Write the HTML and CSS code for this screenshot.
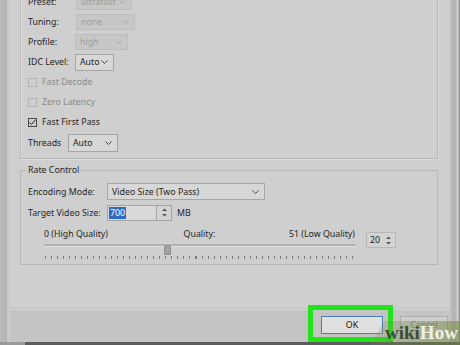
FILE: index.html
```html
<!DOCTYPE html>
<html>
<head>
<meta charset="utf-8">
<link rel="stylesheet" href="styles.css">
</head>
<body>
<div class="screen">
  <div class="top">
    <div class="edge-left"></div>
    <div class="window">
      <div class="main">
        <div class="group group-x264">
          <div class="row">
            <span class="lbl w48">Preset:</span>
            <span class="select disabled s-preset">ultrafast<svg class="chev" width="7" height="4" viewBox="0 0 7 4"><polyline points="0.5,0.5 3.5,3.5 6.5,0.5"/></svg></span>
          </div>
          <div class="row">
            <span class="lbl w48">Tuning:</span>
            <span class="select disabled s-tuning">none<svg class="chev" width="7" height="4" viewBox="0 0 7 4"><polyline points="0.5,0.5 3.5,3.5 6.5,0.5"/></svg></span>
          </div>
          <div class="row">
            <span class="lbl w47">Profile:</span>
            <span class="select disabled s-profile">high<svg class="chev" width="7" height="4" viewBox="0 0 7 4"><polyline points="0.5,0.5 3.5,3.5 6.5,0.5"/></svg></span>
          </div>
          <div class="row">
            <span class="lbl w47">IDC Level:</span>
            <span class="select s-idc">Auto<svg class="chev" width="7" height="4" viewBox="0 0 7 4"><polyline points="0.5,0.5 3.5,3.5 6.5,0.5"/></svg></span>
          </div>
          <div class="row disabled-text">
            <span class="check"></span>Fast Decode
          </div>
          <div class="row disabled-text">
            <span class="check"></span>Zero Latency
          </div>
          <div class="row">
            <span class="check checked"><svg width="7" height="7" viewBox="0 0 7 7"><polyline points="0.5,3.5 2.5,5.5 6.5,0.8"/></svg></span>Fast First Pass
          </div>
          <div class="row tall">
            <span class="lbl w40">Threads</span>
            <span class="select s-threads">Auto<svg class="chev" width="7" height="4" viewBox="0 0 7 4"><polyline points="0.5,0.5 3.5,3.5 6.5,0.5"/></svg></span>
          </div>
        </div>

        <fieldset class="group-rate">
          <legend>Rate Control</legend>
          <div class="row r-enc">
            <span class="lbl w79">Encoding Mode:</span>
            <span class="select s-enc">Video Size (Two Pass)<svg class="chev" width="7" height="4" viewBox="0 0 7 4"><polyline points="0.5,0.5 3.5,3.5 6.5,0.5"/></svg></span>
          </div>
          <div class="row r-target">
            <span class="lbl w79">Target Video Size:</span>
            <span class="numbox"><span class="sel">700</span></span>
            <span class="spin"><svg width="5" height="9" viewBox="0 0 5 9"><polygon points="2.5,0.5 5,3 0,3"/><polygon points="0,6 5,6 2.5,8.5"/></svg></span>
            <span class="unit">MB</span>
          </div>
          <div class="quality">
            <div class="slider">
              <div class="slider-labels">
                <span class="q-left">0 (High Quality)</span>
                <span class="q-mid">Quality:</span>
                <span class="q-right">51 (Low Quality)</span>
              </div>
              <div class="track">
                <div class="track-line"></div>
                <span class="thumb" style="left:38.6%"></span>
              </div>
              <div class="ticks"></div>
            </div>
            <div class="spinbox">
              <span>20</span>
              <svg width="5" height="9" viewBox="0 0 5 9"><polygon points="2.5,0.5 5,3 0,3"/><polygon points="0,6 5,6 2.5,8.5"/></svg>
            </div>
          </div>
        </fieldset>
      </div>
      <div class="footer">
        <span class="btn btn-ok">OK</span>
        <span class="btn btn-cancel">Cancel</span>
      </div>
    </div>
    <div class="edge-right"></div>
  </div>
  <div class="taskbar"></div>

  <div class="highlight"></div>
  <div class="watermark"><span class="wiki">wiki</span><span class="how">How</span></div>
</div>
</body>
</html>
```

FILE: styles.css
```css
* { box-sizing: border-box; margin: 0; padding: 0; }
html, body { width: 460px; height: 345px; overflow: hidden; }
body {
  background: #cfcfcf;
  font-family: "Noto Sans", "Liberation Sans", sans-serif;
  font-size: 8.8px;
  color: #1f1f1f;
}
.screen {
  position: relative;
  width: 460px;
  height: 345px;
  display: flex;
  flex-direction: column;
  overflow: hidden;
  background: #cfcfcf;
}
.top { flex: 1; display: flex; min-height: 0; }
.edge-left {
  width: 10px;
  background: linear-gradient(to right, #bababa 0, #b3b3b3 7px, #c8c8c8 7px, #cbcbcb 10px);
}
.edge-right {
  width: 10px;
  background: linear-gradient(to right, #c2c2c2 0, #adadad 5px, #c6c6c6 6px, #c4c4c4 9px, #8e8e8e 9px);
}
.taskbar { height: 3px; background: linear-gradient(to right, #9a9a9a 0, #9a9a9a 25px, #5c5c5c 25px); }
.window { flex: 1; display: flex; flex-direction: column; min-width: 0; }
.main { flex: 1; padding: 0 12px 0 10px; }

/* group boxes */
.group {
  border: 1px solid #b7b7b7;
  box-shadow: inset 1px 1px 0 #dcdcdc, 1px 1px 0 #dcdcdc;
}
.group-x264 { margin-top: -9px; padding: 0 0 4px 7px; }
.row { display: flex; align-items: center; height: 20px; white-space: nowrap; }
.row.tall { height: 22px; }
.lbl { white-space: nowrap; flex: none; }
.w48 { width: 48px; }
.w47 { width: 47px; }
.w40 { width: 40px; }
.w79 { width: 79px; }

.select {
  display: flex;
  align-items: center;
  justify-content: space-between;
  padding: 0 5px 0 4px;
  border: 1px solid #a6a6a6;
  background: #d7d7d7;
  color: #1f1f1f;
  flex: none;
}
.select .chev { fill: none; stroke: #444; stroke-width: 1; }
.select.disabled { background: #c7c7c7; border-color: #bdbdbd; color: #9c9c9c; }
.select.disabled .chev { stroke: #a8a8a8; }
.s-preset { width: 56px; height: 16px; }
.s-tuning { width: 59px; height: 16px; }
.s-profile { width: 53px; height: 16px; }
.s-idc { width: 39px; height: 17px; }
.s-threads { width: 50px; height: 18px; }
.s-enc { width: 158px; height: 17px; }

.check {
  width: 9px;
  height: 9px;
  border: 1px solid #b3b3b3;
  margin-right: 5px;
  flex: none;
  display: flex;
  align-items: center;
  justify-content: center;
}
.check.checked { border-color: #4a4a4a; }
.check svg { fill: none; stroke: #222; stroke-width: 1; }
.disabled-text { color: #8a8a8a; }

/* rate control */
fieldset.group-rate {
  margin-top: 5px;
  padding: 0 7px 5px 7px;
  border: 1px solid #b7b7b7;
  min-width: 0;
}
fieldset.group-rate legend { padding: 0 1px; margin-left: -1px; line-height: 12px; }
.r-enc { margin-top: 6px; height: 19px; }
.r-target { margin-top: 2px; height: 19px; }
.numbox {
  width: 50px;
  height: 16px;
  border: 1px solid #a6a6a6;
  background: #d9d9d9;
  display: flex;
  align-items: center;
  padding-left: 1px;
}
.numbox .sel { background: #2f6bc4; color: #fff; padding: 0 1px; line-height: 12px; }
.spin {
  width: 15px;
  height: 16px;
  border: 1px solid #a6a6a6;
  border-left: none;
  background: #d3d3d3;
  display: flex;
  align-items: center;
  justify-content: center;
}
.spin svg, .spinbox svg { fill: #555; }
.unit { margin-left: 5px; }

.quality { display: flex; align-items: flex-start; margin-top: 6px; padding-left: 16px; }
.slider { width: 311px; flex: none; }
.slider-labels {
  display: grid;
  grid-template-columns: 1fr auto 1fr;
  height: 12px;
  line-height: 12px;
}
.q-right { text-align: right; }
.track { position: relative; height: 11px; }
.track-line {
  margin-top: 4px;
  height: 3px;
  background: #b2b2b2;
  border-bottom: 1px solid #dedede;
}
.thumb {
  position: absolute;
  top: 1px;
  width: 7px;
  height: 10px;
  background: #a2a2a2;
  border: 1px solid #8f8f8f;
  border-radius: 2px 2px 0 0;
}
.ticks {
  margin-top: 1px;
  margin-left: 1px;
  height: 3px;
  width: 308px;
  background: repeating-linear-gradient(to right, #7a7a7a 0, #7a7a7a 1px, transparent 1px, transparent 6.02px);
}
.spinbox {
  margin-left: 11px;
  margin-top: 4px;
  width: 30px;
  height: 16px;
  border: 1px solid #b6b6b6;
  background: #d3d3d3;
  display: flex;
  align-items: center;
  justify-content: space-between;
  padding: 0 4px 0 3px;
}

/* footer */
.footer {
  height: 33px;
  border-top: 1px solid #d8d8d8;
  box-shadow: 0 -1px 0 #c2c2c2;
  background: #c4c4c4;
  display: flex;
  align-items: flex-start;
  justify-content: flex-end;
  padding: 6px 2px 0 0;
  gap: 17px;
}
.btn {
  height: 18px;
  display: flex;
  align-items: center;
  justify-content: center;
  border: 1px solid #adadad;
}
.btn-ok { width: 62px; border-color: #4b7db5; background: #e0e0e0; color: #111; }
.btn-cancel { width: 48px; background: #cdcdcd; color: #7e7e7e; }

/* overlays */
.highlight {
  position: absolute;
  left: 308px;
  top: 305px;
  width: 85px;
  height: 37px;
  border: 5px solid #22e31a;
}
.watermark {
  position: absolute;
  left: 370px;
  top: 321px;
  width: 90px;
  height: 24px;
  background: linear-gradient(to right, rgba(120, 140, 80, 0.2), rgba(110, 135, 60, 0.55));
  clip-path: polygon(14px 0, 100% 0, 100% 100%, 0 100%);
  display: flex;
  align-items: center;
  padding-left: 15px;
  font-family: "Liberation Serif", serif;
  font-weight: bold;
  font-size: 19px;
  line-height: 24px;
}
.wiki { color: #3f4b33; }
.how { color: #eef1e4; }
```
